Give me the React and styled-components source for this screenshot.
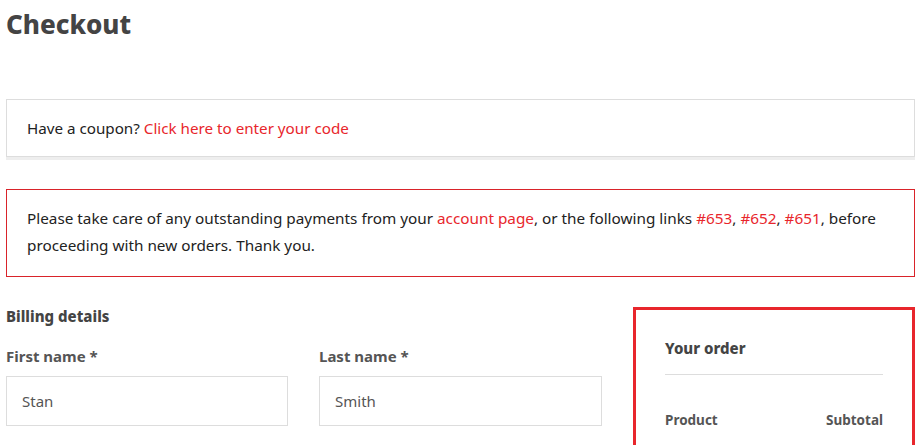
import styled, { createGlobalStyle } from 'styled-components';

const GlobalStyle = createGlobalStyle`
  body {
    margin: 0;
    background: #fff;
    font-family: 'Noto Sans', 'Open Sans', sans-serif;
    color: #222;
  }
`;

const Page = styled.div`
  width: 909px;
  padding: 6px 0 0 6px;
`;

const Title = styled.h1`
  margin: 0;
  font-size: 26px;
  line-height: 36px;
  font-weight: 800;
  color: #444;
`;

const CouponBox = styled.div`
  margin-top: 57px;
  border: 1px solid #ddd;
  box-shadow: 0 3px 0 #eee;
  padding: 15px 20px;
  font-size: 15.2px;
  line-height: 26px;
`;

const Link = styled.a`
  color: #e8262c;
  text-decoration: none;
`;

const NoticeBox = styled.div`
  margin-top: 32px;
  border: 1px solid #d9232a;
  padding: 15px 20px 17px;
  font-size: 15.3px;
  line-height: 27px;
`;

const Columns = styled.div`
  display: flex;
  gap: 31px;
  margin-top: 30px;
  align-items: flex-start;
`;

const Billing = styled.div`
  width: 596px;
  padding-top: 0;
`;

const SectionTitle = styled.h3`
  margin: 0;
  font-size: 15px;
  line-height: 18px;
  font-weight: 800;
  color: #444;
`;

const FieldRow = styled.div`
  display: grid;
  grid-template-columns: 282px 283px;
  gap: 31px;
  margin-top: 21px;
`;

const Field = styled.div`
  display: flex;
  flex-direction: column;
`;

const Label = styled.label`
  font-size: 15px;
  line-height: 20px;
  font-weight: 700;
  color: #555;
  margin-bottom: 10px;
`;

const Input = styled.div`
  height: 48px;
  border: 1px solid #ddd;
  padding: 0 15px;
  display: flex;
  align-items: center;
  font-size: 15px;
  color: #555;
`;

const OrderBox = styled.div`
  box-sizing: border-box;
  width: 282px;
  height: 160px;
  border: 3px solid #e8262c;
  padding: 28px 29px 0;
`;

const OrderTitle = styled.h3`
  margin: 0;
  padding: 0 0 16px;
  font-size: 15px;
  line-height: 20px;
  font-weight: 800;
  color: #444;
  border-bottom: 1px solid #ddd;
`;

const TableHead = styled.div`
  display: flex;
  justify-content: space-between;
  padding: 35px 0 16px;
  border-bottom: 1px solid #ddd;
  font-size: 13.5px;
  line-height: 20px;
  font-weight: 700;
  color: #555;
`;

export default function App() {
  return (
    <Page>
      <GlobalStyle />
      <Title>Checkout</Title>
      <CouponBox>
        Have a coupon? <Link href="#">Click here to enter your code</Link>
      </CouponBox>
      <NoticeBox>
        Please take care of any outstanding payments from your <Link href="#">account page</Link>, or the
        following links <Link href="#">#653</Link>, <Link href="#">#652</Link>, <Link href="#">#651</Link>,
        before proceeding with new orders. Thank you.
      </NoticeBox>
      <Columns>
        <Billing>
          <SectionTitle>Billing details</SectionTitle>
          <FieldRow>
            <Field>
              <Label>First name *</Label>
              <Input>Stan</Input>
            </Field>
            <Field>
              <Label>Last name *</Label>
              <Input>Smith</Input>
            </Field>
          </FieldRow>
        </Billing>
        <OrderBox>
          <OrderTitle>Your order</OrderTitle>
          <TableHead>
            <span>Product</span>
            <span>Subtotal</span>
          </TableHead>
        </OrderBox>
      </Columns>
    </Page>
  );
}
